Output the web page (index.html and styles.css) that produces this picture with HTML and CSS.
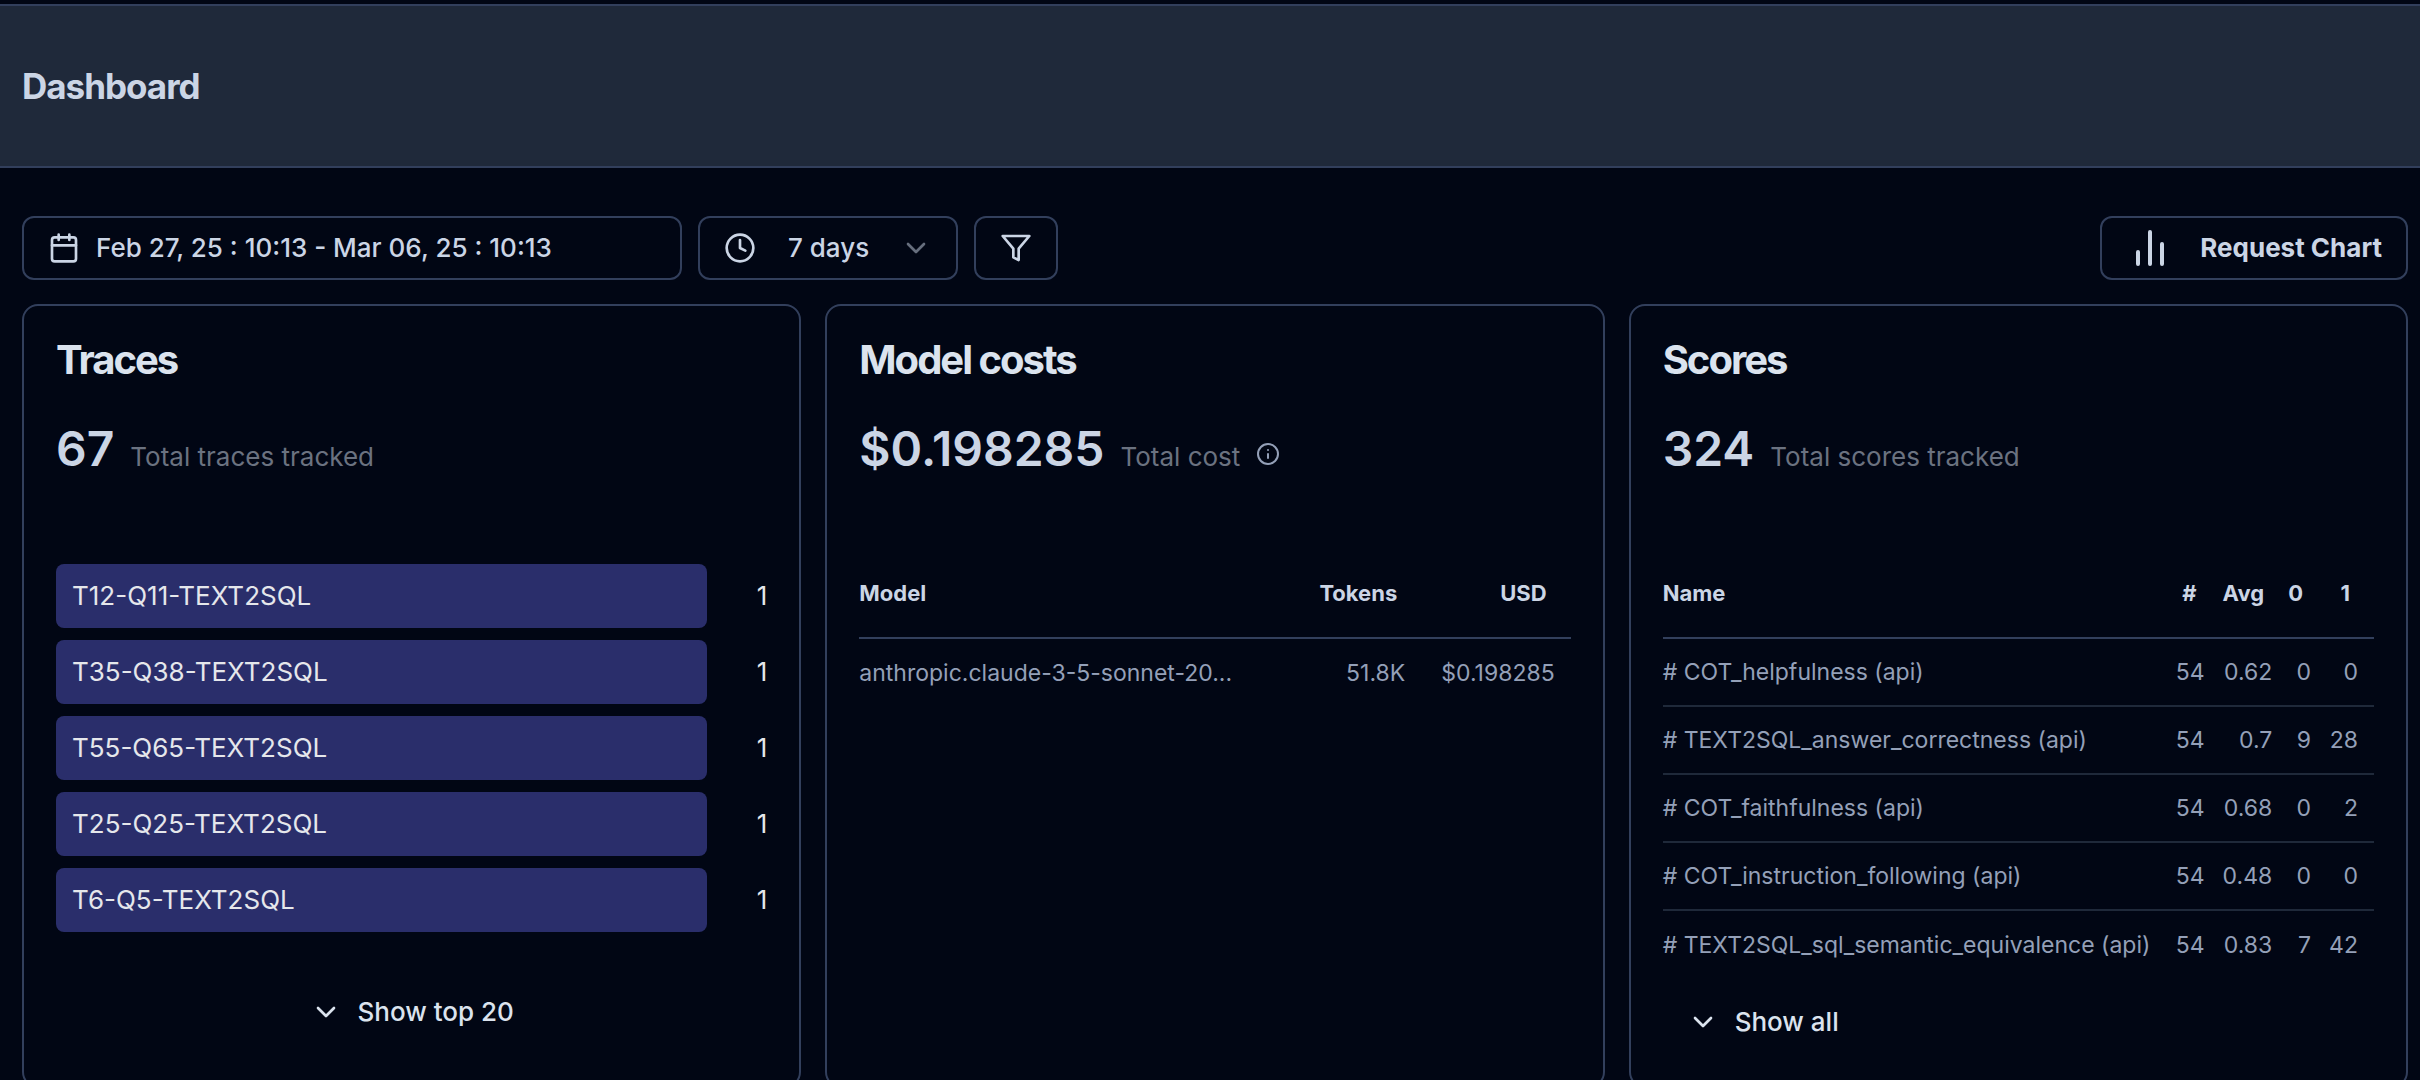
FILE: index.html
```html
<!DOCTYPE html>
<html lang="en">
<head>
<meta charset="utf-8">
<title>Dashboard</title>
<link rel="stylesheet" href="styles.css">
</head>
<body>
<header class="page-header">
  <h1 class="page-title">Dashboard</h1>
</header>
<main class="content">
  <div class="toolbar">
    <button type="button" class="control date-range">
      <svg class="icon" viewBox="0 0 24 24" aria-hidden="true"><rect x="3" y="4" width="18" height="18" rx="2"/><path d="M16 2v4M8 2v4M3 10h18"/></svg>
      <span>Feb 27, 25 : 10:13 - Mar 06, 25 : 10:13</span>
    </button>
    <button type="button" class="control period" aria-haspopup="listbox">
      <svg class="icon" viewBox="0 0 24 24" aria-hidden="true"><circle cx="12" cy="12" r="10"/><path d="M12 6v6l4 2"/></svg>
      <span class="period-value">7 days</span>
      <svg class="icon muted" viewBox="0 0 24 24" aria-hidden="true"><path d="m6 9 6 6 6-6"/></svg>
    </button>
    <button type="button" class="control" aria-label="Filter">
      <svg class="icon" viewBox="0 0 24 24" aria-hidden="true"><path d="M22 3H2l8 9.46V19l4 2v-8.54L22 3z"/></svg>
    </button>
    <button type="button" class="control request">
      <svg class="icon bars-icon" viewBox="0 0 24 24" aria-hidden="true"><path d="M18 20V10M12 20V4M6 20v-6"/></svg>
      <span>Request Chart</span>
    </button>
  </div>

  <div class="cards">
    <section class="card">
      <h2 class="card-title">Traces</h2>
      <p class="metric"><strong class="metric-value">67</strong><span class="metric-label">Total traces tracked</span></p>
      <ul class="bar-list">
        <li class="bar-row"><span class="bar">T12-Q11-TEXT2SQL</span><span class="bar-value">1</span></li>
        <li class="bar-row"><span class="bar">T35-Q38-TEXT2SQL</span><span class="bar-value">1</span></li>
        <li class="bar-row"><span class="bar">T55-Q65-TEXT2SQL</span><span class="bar-value">1</span></li>
        <li class="bar-row"><span class="bar">T25-Q25-TEXT2SQL</span><span class="bar-value">1</span></li>
        <li class="bar-row"><span class="bar">T6-Q5-TEXT2SQL</span><span class="bar-value">1</span></li>
      </ul>
      <button type="button" class="expand expand-center">
        <svg class="icon" viewBox="0 0 24 24" aria-hidden="true"><path d="m6 9 6 6 6-6"/></svg>
        <span>Show top 20</span>
      </button>
    </section>

    <section class="card">
      <h2 class="card-title">Model costs</h2>
      <p class="metric"><strong class="metric-value">$0.198285</strong><span class="metric-label">Total cost</span>
        <svg class="info" viewBox="0 0 24 24" aria-hidden="true"><circle cx="12" cy="12" r="10"/><path d="M12 16v-4M12 8h.01"/></svg>
      </p>
      <table class="table costs">
        <thead><tr><th>Model</th><th>Tokens</th><th>USD</th></tr></thead>
        <tbody><tr><td>anthropic.claude-3-5-sonnet-20...</td><td>51.8K</td><td>$0.198285</td></tr></tbody>
      </table>
    </section>

    <section class="card">
      <h2 class="card-title">Scores</h2>
      <p class="metric"><strong class="metric-value">324</strong><span class="metric-label">Total scores tracked</span></p>
      <table class="table">
        <thead><tr><th>Name</th><th>#</th><th>Avg</th><th>0</th><th>1</th></tr></thead>
        <tbody>
          <tr><td># COT_helpfulness (api)</td><td>54</td><td>0.62</td><td>0</td><td>0</td></tr>
          <tr><td># TEXT2SQL_answer_correctness (api)</td><td>54</td><td>0.7</td><td>9</td><td>28</td></tr>
          <tr><td># COT_faithfulness (api)</td><td>54</td><td>0.68</td><td>0</td><td>2</td></tr>
          <tr><td># COT_instruction_following (api)</td><td>54</td><td>0.48</td><td>0</td><td>0</td></tr>
          <tr><td># TEXT2SQL_sql_semantic_equivalence (api)</td><td>54</td><td>0.83</td><td>7</td><td>42</td></tr>
        </tbody>
      </table>
      <button type="button" class="expand">
        <svg class="icon" viewBox="0 0 24 24" aria-hidden="true"><path d="m6 9 6 6 6-6"/></svg>
        <span>Show all</span>
      </button>
    </section>
  </div>
</main>
</body>
</html>
```
FILE: styles.css
```css
:root {
  --bg: #010614;
  --border: #323f5c;
  --row-border: #1f293a;
  --text: #cbd5e5;
  --heading: #dbe3ee;
  --muted: #94a0b8;
  --label: #6b7280;
}

* {
  box-sizing: border-box;
}

html {
  scrollbar-width: none;
}

body {
  margin: 0;
  padding-top: 4px;
  background: var(--bg);
  color: var(--text);
  font-family: Inter, "Liberation Sans", sans-serif;
  font-size: 26px;
  line-height: 40px;
}

h1, h2, p, ul {
  margin: 0;
  padding: 0;
}

.page-header {
  display: flex;
  align-items: center;
  height: 164px;
  padding: 0 22px;
  background: #1f293a;
  border-top: 2px solid var(--border);
  border-bottom: 2px solid var(--border);
}

.page-title {
  font-size: 35px;
  line-height: 48px;
  font-weight: 700;
  letter-spacing: -1px;
}

.content {
  padding: 48px 12px 24px 22px;
}

.toolbar {
  display: flex;
  gap: 16px;
  margin-bottom: 24px;
}

.control {
  display: flex;
  align-items: center;
  height: 64px;
  padding: 0 24px;
  background: transparent;
  border: 2px solid var(--border);
  border-radius: 12px;
  color: inherit;
  font: inherit;
  font-weight: 500;
}

.icon {
  flex: none;
  width: 32px;
  height: 32px;
  fill: none;
  stroke: currentColor;
  stroke-width: 2;
  stroke-linecap: round;
  stroke-linejoin: round;
}

.muted {
  opacity: 0.5;
}

.date-range {
  gap: 16px;
  width: 660px;
}

.period {
  width: 260px;
}

.period-value {
  flex: 1;
  padding-left: 32px;
  text-align: left;
}

.request {
  gap: 26px;
  margin-left: auto;
  font-weight: 700;
}

.bars-icon {
  width: 48px;
  height: 48px;
}

.cards {
  display: grid;
  grid-template-columns: repeat(3, minmax(0, 1fr));
  gap: 24px;
}

.card {
  padding: 30px 32px 32px;
  border: 2px solid var(--border);
  border-radius: 16px;
}

.card-title {
  color: var(--heading);
  font-size: 40px;
  line-height: 48px;
  font-weight: 700;
  letter-spacing: -2px;
}

.metric {
  display: flex;
  align-items: baseline;
  gap: 16px;
  margin-top: 33px;
  line-height: 64px;
}

.metric-value {
  font-size: 48px;
  font-weight: 600;
}

.metric-label {
  color: var(--label);
}

.info {
  width: 24px;
  height: 24px;
  fill: none;
  stroke: var(--muted);
  stroke-width: 2;
  stroke-linecap: round;
}

.bar-list {
  display: grid;
  gap: 12px;
  margin-top: 75px;
  list-style: none;
}

.bar-row {
  display: flex;
  align-items: center;
  gap: 50px;
  color: #e5e7eb;
}

.bar {
  flex: 1;
  padding: 12px 16px;
  background: #2a2e6b;
  border-radius: 8px;
}

.table {
  width: 100%;
  margin-top: 59px;
  border-collapse: collapse;
  font-size: 23px;
  line-height: 28px;
  white-space: nowrap;
}

.table th {
  height: 90px;
  padding: 0 24px 0 0;
  border-bottom: 2px solid var(--border);
  font-size: 22px;
  font-weight: 700;
  text-align: right;
}

.table td {
  height: 68px;
  padding: 0 16px 0 2px;
  color: var(--muted);
  text-align: right;
}

.table tr + tr td {
  border-top: 2px solid var(--row-border);
}

.table th:first-child,
.table td:first-child {
  width: 100%;
  padding-left: 0;
  text-align: left;
}

.costs td:last-child {
  padding-left: 20px;
}

.expand {
  display: flex;
  align-items: center;
  gap: 16px;
  height: 64px;
  margin-top: 12px;
  padding: 0 24px;
  background: transparent;
  border: 0;
  color: var(--heading);
  font: inherit;
  font-weight: 500;
}

.expand-center {
  margin: 48px auto 0;
}
```
